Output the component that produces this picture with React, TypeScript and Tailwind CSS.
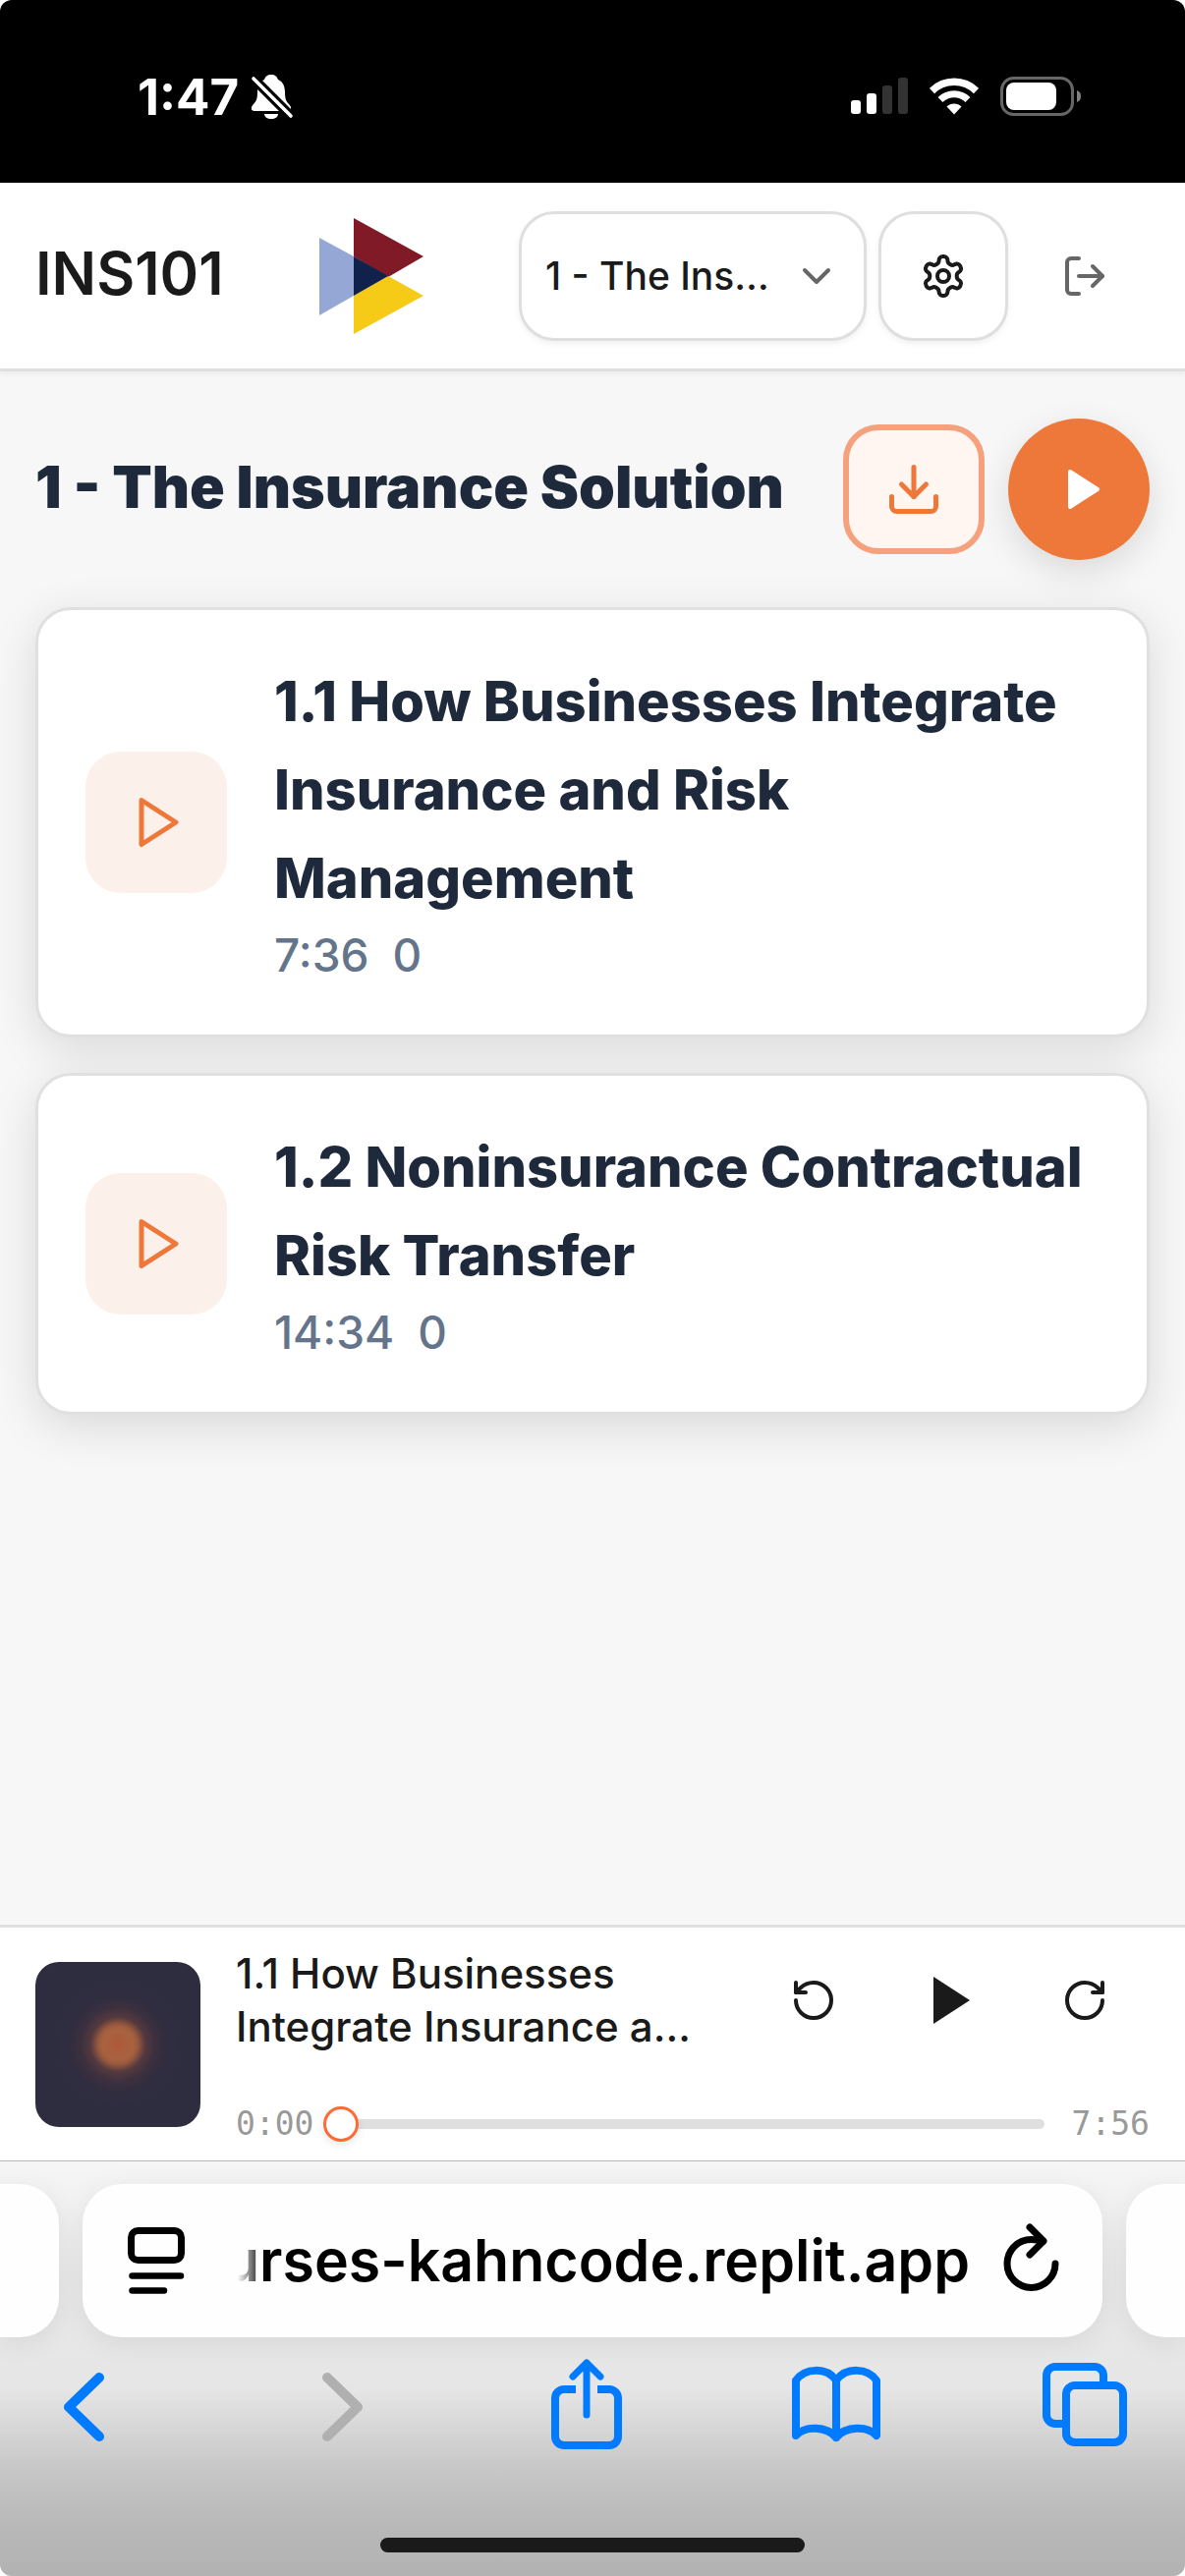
import React from "react";

const lucide = {
  viewBox: "0 0 24 24",
  fill: "none",
  stroke: "currentColor",
  strokeWidth: 2,
  strokeLinecap: "round" as const,
  strokeLinejoin: "round" as const,
  "aria-hidden": true,
};

function StatusBar() {
  return (
    <div className="flex h-[186px] items-center justify-between bg-black pt-[10px] pr-[105px] pl-[140px] text-white">
      <div className="flex items-center gap-[12px]">
        <span className="text-[51px] leading-none font-bold">1:47</span>
        <svg className="h-[46px] w-[44px]" viewBox="0 0 44 46" fill="none" aria-hidden="true">
          <path d="M21 1c-4 0-6 2-7 5C9 8 7 13 7 19c0 6-1 9-4 12-3 3-3 7 1 7h34c4 0 4-4 1-7-3-3-4-6-4-12 0-6-2-11-7-13-1-3-3-5-7-5Z" fill="#fff" />
          <path d="M14 41h14c0 3-3 5-7 5s-7-2-7-5Z" fill="#fff" />
          <path d="M2 4 42 44" stroke="#000" strokeWidth="10" />
          <path d="M3 5 41 43" stroke="#fff" strokeWidth="3.6" strokeLinecap="round" />
        </svg>
      </div>
      <div className="flex items-center gap-[22px]">
        <svg className="h-[38px] w-[58px]" viewBox="0 0 58 38" fill="#fff" aria-hidden="true">
          <rect x="0" y="23" width="10" height="14" rx="3" />
          <rect x="16" y="16" width="10" height="21" rx="3" />
          <rect x="32" y="8" width="10" height="29" rx="3" fill="#333" />
          <rect x="48" y="0" width="10" height="37" rx="3" fill="#333" />
        </svg>
        <svg className="h-[38px] w-[50px]" viewBox="0 0 50 38" fill="none" stroke="#fff" aria-hidden="true">
          <path d="M2.5 13.5a32 32 0 0 1 45 0" strokeWidth="7.5" />
          <path d="M11 22.500a20 20 0 0 1 28 0" strokeWidth="7" />
          <path d="M25 37.500 17.500 29.500c4-4 11-4 15 0Z" fill="#fff" stroke="none" />
        </svg>
        <svg className="h-[40px] w-[83px]" viewBox="0 0 83 40" fill="none" aria-hidden="true">
          <rect x="1.500" y="1.500" width="72" height="37" rx="12" stroke="#666" strokeWidth="3" />
          <rect x="6" y="6" width="51" height="28" rx="8" fill="#fff" />
          <path d="M78 14c3 1 4 3 4 6s-1 5-4 6Z" fill="#808080" />
        </svg>
      </div>
    </div>
  );
}

function Logo() {
  return (
    <svg className="h-[118px] w-[106px]" viewBox="0 0 106 118" role="img" aria-label="Course logo">
      <path d="M0 20 35 39v40L0 99Z" fill="#95a7d4" />
      <path d="M35 0 106 39 70 60 35 39Z" fill="#811a27" />
      <path d="M35 118 106 79 70 59 35 79Z" fill="#f5cb17" />
      <path d="M35 39 70 59 35 79Z" fill="#10224c" />
    </svg>
  );
}

function Header() {
  return (
    <header className="relative flex items-center border-b-[3px] border-[#dfdfdf] bg-white px-9 pt-[29px] pb-7 shadow-[0_3px_6px_rgba(0,0,0,0.05)]">
      <h1 className="pb-1.5 text-[60px] leading-none font-semibold text-[#1a1a1a]">INS101</h1>
      <div className="flex flex-1 justify-center">
        <Logo />
      </div>
      <div className="flex items-center gap-3">
        <div className="relative">
          <select
            aria-label="Section"
            className="h-[132px] w-[354px] appearance-none truncate rounded-[36px] border-[3px] border-[#dfdfdf] bg-white pr-[90px] pl-6 text-[39px] font-medium text-[#1a1a1a] shadow-[0_3px_6px_rgba(0,0,0,0.06)]"
          >
            <option>1 - The Insurance Solution</option>
          </select>
          <svg {...lucide} className="pointer-events-none absolute top-[42px] right-[27px] size-12 text-[#666]">
            <path d="m6 9 6 6 6-6" />
          </svg>
        </div>
        <button
          aria-label="Settings"
          className="flex size-[132px] items-center justify-center rounded-[36px] border-[3px] border-[#dfdfdf] bg-white text-[#1a1a1a] shadow-[0_3px_6px_rgba(0,0,0,0.06)]"
        >
          <svg {...lucide} className="size-12">
            <path d="M12.22 2h-.44a2 2 0 0 0-2 2v.18a2 2 0 0 1-1 1.73l-.43.25a2 2 0 0 1-2 0l-.15-.08a2 2 0 0 0-2.730.730l-.22.38a2 2 0 0 0 .730 2.730l.15.1a2 2 0 0 1 1 1.720v.51a2 2 0 0 1-1 1.740l-.15.09a2 2 0 0 0-.730 2.730l.22.38a2 2 0 0 0 2.730.730l.15-.08a2 2 0 0 1 2 0l.43.25a2 2 0 0 1 1 1.730V20a2 2 0 0 0 2 2h.44a2 2 0 0 0 2-2v-.18a2 2 0 0 1 1-1.730l.43-.25a2 2 0 0 1 2 0l.15.08a2 2 0 0 0 2.730-.730l.22-.39a2 2 0 0 0-.730-2.730l-.15-.08a2 2 0 0 1-1-1.740v-.5a2 2 0 0 1 1-1.740l.15-.09a2 2 0 0 0 .730-2.730l-.22-.38a2 2 0 0 0-2.730-.730l-.15.08a2 2 0 0 1-2 0l-.43-.25a2 2 0 0 1-1-1.730V4a2 2 0 0 0-2-2z" />
            <circle cx="12" cy="12" r="3" />
          </svg>
        </button>
        <button aria-label="Log out" className="flex size-[132px] items-center justify-center text-[#666]">
          <svg {...lucide} className="size-12">
            <path d="M9 21H5a2 2 0 0 1-2-2V5a2 2 0 0 1 2-2h4" />
            <path d="m16 17 5-5-5-5" />
            <path d="M21 12H9" />
          </svg>
        </button>
      </div>
    </header>
  );
}

type Lesson = { title: string; length: string; count: number };

const lessons: Lesson[] = [
  { title: "1.1 How Businesses Integrate Insurance and Risk Management", length: "7:36", count: 0 },
  { title: "1.2 Noninsurance Contractual Risk Transfer", length: "14:34", count: 0 },
];

function LessonCard({ title, length, count }: Lesson) {
  return (
    <li className="flex items-center gap-12 rounded-[36px] border-[3px] border-[#e0e0e0] bg-white p-12 shadow-[0_12px_48px_rgba(0,0,0,0.12)]">
      <button
        aria-label={`Play ${title}`}
        className="flex size-36 shrink-0 items-center justify-center rounded-[36px] bg-[#fcf0ea] text-[#ee7839]"
      >
        <svg {...lucide} className="size-[60px]">
          <path d="M6 3 20 12 6 21Z" />
        </svg>
      </button>
      <div className="min-w-0 flex-1">
        <h3 className="text-[56px] leading-[90px] font-extrabold text-[#1e293b]">{title}</h3>
        <p className="flex gap-6 text-[46px] leading-[66px] font-medium text-[#64748b]">
          <span>{length}</span>
          <span>{count}</span>
        </p>
      </div>
    </li>
  );
}

function Player() {
  return (
    <section
      aria-label="Player"
      className="flex items-center gap-9 border-t-[3px] border-[#e0e0e0] bg-white px-9 pt-5 pb-[19px] text-[#1a1a1a]"
    >
      <div className="size-[168px] shrink-0 rounded-3xl bg-[radial-gradient(circle,#ae5939_0px,#a7623f_16px,#9a5a3e_20px,#54393e_28px,#3c303f_38px,#302d3f_50px,#2d2d3f_70px)]" />
      <div className="min-w-0 flex-1">
        <div className="flex items-center">
          <p className="line-clamp-2 min-w-0 flex-1 text-[42px] leading-[54px] font-medium">
            1.1 How Businesses Integrate Insurance a...
          </p>
          <div className="flex shrink-0 items-center gap-1.5 pl-6">
            <button aria-label="Rewind" className="flex h-[108px] w-[132px] items-center justify-center">
              <svg {...lucide} className="size-12">
                <path d="M3 12a9 9 0 1 0 9-9 9.750 9.750 0 0 0-6.740 2.740L3 8" />
                <path d="M3 3v5h5" />
              </svg>
            </button>
            <button aria-label="Play" className="flex h-[108px] w-[132px] items-center justify-center">
              <svg className="size-12" viewBox="0 0 48 48" fill="currentColor" aria-hidden="true">
                <path d="M8 0 45 24 8 48Z" />
              </svg>
            </button>
            <button aria-label="Forward" className="flex h-[108px] w-[132px] items-center justify-center">
              <svg {...lucide} className="size-12">
                <path d="M21 12a9 9 0 1 1-9-9c2.520 0 4.930 1 6.740 2.740L21 8" />
                <path d="M21 3v5h-5" />
              </svg>
            </button>
          </div>
        </div>
        <div className="mt-[54px] flex items-center font-['DejaVu_Sans_Mono',monospace] text-[33px] leading-9 text-[#999]">
          <span>0:00</span>
          <input
            type="range"
            aria-label="Seek"
            min={0}
            max={476}
            defaultValue={0}
            className="mr-7 ml-[10px] h-9 min-w-0 flex-1 appearance-none bg-transparent [&::-webkit-slider-runnable-track]:h-[10px] [&::-webkit-slider-runnable-track]:rounded-full [&::-webkit-slider-runnable-track]:bg-[#dfdfdf] [&::-webkit-slider-thumb]:-mt-[13px] [&::-webkit-slider-thumb]:size-9 [&::-webkit-slider-thumb]:appearance-none [&::-webkit-slider-thumb]:rounded-full [&::-webkit-slider-thumb]:border-[3px] [&::-webkit-slider-thumb]:border-[#ff6b35] [&::-webkit-slider-thumb]:bg-white [&::-webkit-slider-thumb]:shadow-[0_3px_9px_rgba(0,0,0,0.1)]"
          />
          <span>7:56</span>
        </div>
      </div>
    </section>
  );
}

function BrowserBar() {
  return (
    <footer className="flex flex-col items-center border-t border-[#b9b9b9] bg-[linear-gradient(to_bottom,#f6f6f6_0px,#e9e9e9_120px,#e6e6e6_230px,#c8c8c8_310px,#b8b8b8_370px,#b2b2b2_422px)] pt-[23px] pb-6">
      <div className="flex w-full gap-6">
        <div className="h-[156px] w-[60px] shrink-0 rounded-r-[40px] bg-[#fefefe] shadow-[0_6px_30px_rgba(0,0,0,0.07)]" />
        <div className="flex h-[156px] min-w-0 flex-1 items-center rounded-[40px] bg-[#fefefe] pr-[43px] pl-[46px] text-black shadow-[0_6px_30px_rgba(0,0,0,0.07)]">
          <button aria-label="Page menu" className="shrink-0">
            <svg className="h-[68px] w-[58px]" viewBox="0 0 58 68" fill="none" stroke="currentColor" strokeWidth="7" strokeLinecap="round" aria-hidden="true">
              <rect x="3.500" y="3.500" width="51" height="30" rx="7" />
              <path d="M4.500 49.500H54M4.500 64.500H37" strokeWidth="6.500" />
            </svg>
          </button>
          <div className="ml-9 flex min-w-0 flex-1 justify-end [mask-image:linear-gradient(to_right,transparent_18px,black_44px)]">
            <span className="text-[59px] leading-[80px] font-semibold whitespace-nowrap">urses-kahncode.replit.app</span>
          </div>
          <button aria-label="Reload" className="ml-[34px] shrink-0">
            <svg className="h-[80px] w-[58px]" viewBox="0 0 58 80" fill="none" stroke="currentColor" strokeWidth="7" strokeLinecap="round" strokeLinejoin="round" aria-hidden="true">
              <path d="M53 43a24.500 24.500 0 1 1-24.500-24.500c5 0 8 .5 12 2" />
              <path d="M27 6 41 20 27 34" />
            </svg>
          </button>
        </div>
        <div className="h-[156px] w-[60px] shrink-0 rounded-l-[40px] bg-[#fefefe] shadow-[0_6px_30px_rgba(0,0,0,0.07)]" />
      </div>
      <nav aria-label="Browser" className="mt-[19px] flex w-full justify-between pr-[52px] pl-[35px] text-[#007aff]">
        <button aria-label="Back">
          <svg className="size-[100px]" viewBox="0 0 100 100" fill="none" stroke="currentColor" strokeWidth="10" strokeLinecap="round" strokeLinejoin="round" aria-hidden="true">
            <path d="M66 22 35 52 66 82" />
          </svg>
        </button>
        <button aria-label="Forward" disabled className="text-[#b0b0b0]">
          <svg className="size-[100px]" viewBox="0 0 100 100" fill="none" stroke="currentColor" strokeWidth="10" strokeLinecap="round" strokeLinejoin="round" aria-hidden="true">
            <path d="M43 22 74 52 43 82" />
          </svg>
        </button>
        <button aria-label="Share">
          <svg className="size-[100px]" viewBox="0 0 100 100" fill="none" stroke="currentColor" strokeWidth="8" strokeLinejoin="round" aria-hidden="true">
            <path d="M41 34H29a9 9 0 0 0-9 9V82a9 9 0 0 0 9 9H75a9 9 0 0 0 9-9V43a9 9 0 0 0-9-9H63" />
            <path d="M52 60V8M38 21 52 7 66 21" strokeWidth="7" strokeLinecap="round" />
          </svg>
        </button>
        <button aria-label="Bookmarks">
          <svg className="size-[100px]" viewBox="0 0 100 100" fill="none" stroke="currentColor" strokeWidth="8" strokeLinecap="round" strokeLinejoin="round" aria-hidden="true">
            <path d="M52 25C42 11 20 12 11 25V81C20 71 42 71 52 83 62 71 84 71 93 81V25C84 12 62 11 52 25Z" />
            <path d="M52 25V83" />
          </svg>
        </button>
        <button aria-label="Tabs">
          <svg className="size-[100px]" viewBox="0 0 100 100" fill="none" stroke="currentColor" strokeWidth="8" aria-hidden="true">
            <path d="M28 69H20a9 9 0 0 1-9-9V20a9 9 0 0 1 9-9H60a9 9 0 0 1 9 9v9" />
            <rect x="31" y="30" width="58" height="58" rx="9" />
          </svg>
        </button>
      </nav>
      <div className="mt-[85px] h-[15px] w-[432px] rounded-full bg-[#1a1a1a]" />
    </footer>
  );
}

export default function App() {
  return (
    <div className="bg-white font-['Inter',sans-serif]">
      <div className="flex min-h-screen flex-col overflow-hidden rounded-[12px] bg-[#f7f7f7]">
        <StatusBar />
        <Header />
        <main className="flex-1 px-9 py-12">
          <div className="flex items-center gap-6">
            <h2 className="flex-1 pb-1 text-[59px] leading-[72px] font-black whitespace-nowrap text-[#1e293b]">
              1 - The Insurance Solution
            </h2>
            <button
              aria-label="Download"
              className="flex h-[132px] w-36 shrink-0 items-center justify-center rounded-[36px] border-[6px] border-[#f5a17d] bg-[#fff5f1] text-[#ee7839]"
            >
              <svg {...lucide} className="size-[60px]">
                <path d="M21 15v4a2 2 0 0 1-2 2H5a2 2 0 0 1-2-2v-4" />
                <path d="m7 10 5 5 5-5" />
                <path d="M12 15V3" />
              </svg>
            </button>
            <button
              aria-label="Play all"
              className="flex size-36 shrink-0 items-center justify-center rounded-full bg-[#ee7839] text-white shadow-[0_12px_36px_rgba(0,0,0,0.12)]"
            >
              <svg {...lucide} fill="currentColor" className="ml-1.5 size-12">
                <path d="M6 3 20 12 6 21Z" />
              </svg>
            </button>
          </div>
          <ul className="mt-12 flex flex-col gap-9">
            {lessons.map((lesson) => (
              <LessonCard key={lesson.title} {...lesson} />
            ))}
          </ul>
        </main>
        <Player />
        <BrowserBar />
      </div>
    </div>
  );
}
